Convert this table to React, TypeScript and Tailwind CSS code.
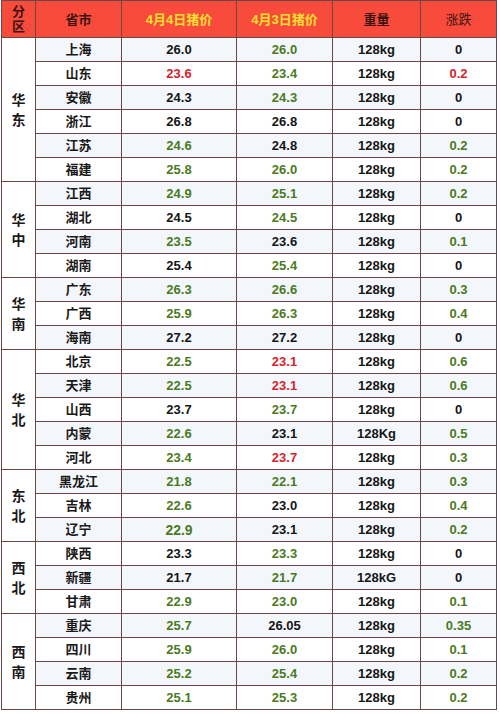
import React from "react";

type C = "k" | "g" | "r";
type Row = { p: string; a: string; ac: C; b: string; bc: C; w: string; d: string; dc: C; big?: boolean };
type Group = { name: string; rows: Row[] };

const R = (p: string, a: string, ac: C, b: string, bc: C, d: string, dc: C, w = "128kg", big = false): Row => ({ p, a, ac, b, bc, w, d, dc, big });

const groups: Group[] = [
  {
    name: "华东",
    rows: [
      R("上海", "26.0", "k", "26.0", "g", "0", "k"),
      R("山东", "23.6", "r", "23.4", "g", "0.2", "r"),
      R("安徽", "24.3", "k", "24.3", "g", "0", "k"),
      R("浙江", "26.8", "k", "26.8", "k", "0", "k"),
      R("江苏", "24.6", "g", "24.8", "k", "0.2", "g"),
      R("福建", "25.8", "g", "26.0", "g", "0.2", "g"),
    ],
  },
  {
    name: "华中",
    rows: [
      R("江西", "24.9", "g", "25.1", "g", "0.2", "g"),
      R("湖北", "24.5", "k", "24.5", "g", "0", "k"),
      R("河南", "23.5", "g", "23.6", "k", "0.1", "g"),
      R("湖南", "25.4", "k", "25.4", "g", "0", "k"),
    ],
  },
  {
    name: "华南",
    rows: [
      R("广东", "26.3", "g", "26.6", "g", "0.3", "g"),
      R("广西", "25.9", "g", "26.3", "g", "0.4", "g"),
      R("海南", "27.2", "k", "27.2", "k", "0", "k"),
    ],
  },
  {
    name: "华北",
    rows: [
      R("北京", "22.5", "g", "23.1", "r", "0.6", "g"),
      R("天津", "22.5", "g", "23.1", "r", "0.6", "g"),
      R("山西", "23.7", "k", "23.7", "g", "0", "k"),
      R("内蒙", "22.6", "g", "23.1", "k", "0.5", "g", "128Kg"),
      R("河北", "23.4", "g", "23.7", "r", "0.3", "g"),
    ],
  },
  {
    name: "东北",
    rows: [
      R("黑龙江", "21.8", "g", "22.1", "g", "0.3", "g"),
      R("吉林", "22.6", "g", "23.0", "k", "0.4", "g"),
      R("辽宁", "22.9", "g", "23.1", "k", "0.2", "g", "128kg", true),
    ],
  },
  {
    name: "西北",
    rows: [
      R("陕西", "23.3", "k", "23.3", "g", "0", "k"),
      R("新疆", "21.7", "k", "21.7", "g", "0", "k", "128kG"),
      R("甘肃", "22.9", "g", "23.0", "g", "0.1", "g"),
    ],
  },
  {
    name: "西南",
    rows: [
      R("重庆", "25.7", "g", "26.05", "k", "0.35", "g"),
      R("四川", "25.9", "g", "26.0", "g", "0.1", "g"),
      R("云南", "25.2", "g", "25.4", "g", "0.2", "g"),
      R("贵州", "25.1", "g", "25.3", "g", "0.2", "g"),
    ],
  },
];

const colorCls = (c: C) => (c === "g" ? "text-[#4b7a1e]" : c === "r" ? "text-[#d3252b]" : "text-[#151515]");

const td = "border border-[#6a4848] text-center p-0 align-middle";

export default function App() {
  let idx = 0;
  return (
    <div className="w-[500px] h-[714px] bg-white" style={{ fontFamily: '"Liberation Sans", "Noto Sans CJK SC", sans-serif' }}>
      <table className="ml-[1px] w-[495px] table-fixed border-collapse font-bold text-[13px] leading-none">
        <colgroup>
          <col className="w-[34px]" />
          <col className="w-[86px]" />
          <col className="w-[115px]" />
          <col className="w-[96px]" />
          <col className="w-[88px]" />
          <col className="w-[76px]" />
        </colgroup>
        <thead>
          <tr className="h-[37px] bg-[#f94b3c] text-[#3b1410]">
            <th className={td}>
              <div className="flex flex-col items-center leading-[15px]">
                <span>分</span>
                <span>区</span>
              </div>
            </th>
            <th className={td}>省市</th>
            <th className={`${td} text-[#ffe22e]`}>4月4日猪价</th>
            <th className={`${td} text-[#ffe22e]`}>4月3日猪价</th>
            <th className={td}>重量</th>
            <th className={`${td} font-normal`}>涨跌</th>
          </tr>
        </thead>
        <tbody>
          {groups.map((g) =>
            g.rows.map((r, i) => {
              const odd = idx % 2 === 0;
              idx++;
              return (
                <tr key={g.name + r.p} className={`h-[24px] ${odd ? "bg-[#f3f7fc]" : "bg-white"}`}>
                  {i === 0 && (
                    <td rowSpan={g.rows.length} className={`${td} bg-white text-[#1a1a1a]`}>
                      <div className="flex flex-col items-center leading-[20px] text-[14px]">
                        <span>{g.name[0]}</span>
                        <span>{g.name[1]}</span>
                      </div>
                    </td>
                  )}
                  <td className={`${td} text-[#1a1a1a]`}>{r.p}</td>
                  <td className={`${td} ${colorCls(r.ac)} ${r.big ? "text-[14px]" : ""}`}>{r.a}</td>
                  <td className={`${td} ${colorCls(r.bc)}`}>{r.b}</td>
                  <td className={`${td} text-[#151515]`}>{r.w}</td>
                  <td className={`${td} ${colorCls(r.dc)}`}>{r.d}</td>
                </tr>
              );
            })
          )}
        </tbody>
      </table>
    </div>
  );
}
